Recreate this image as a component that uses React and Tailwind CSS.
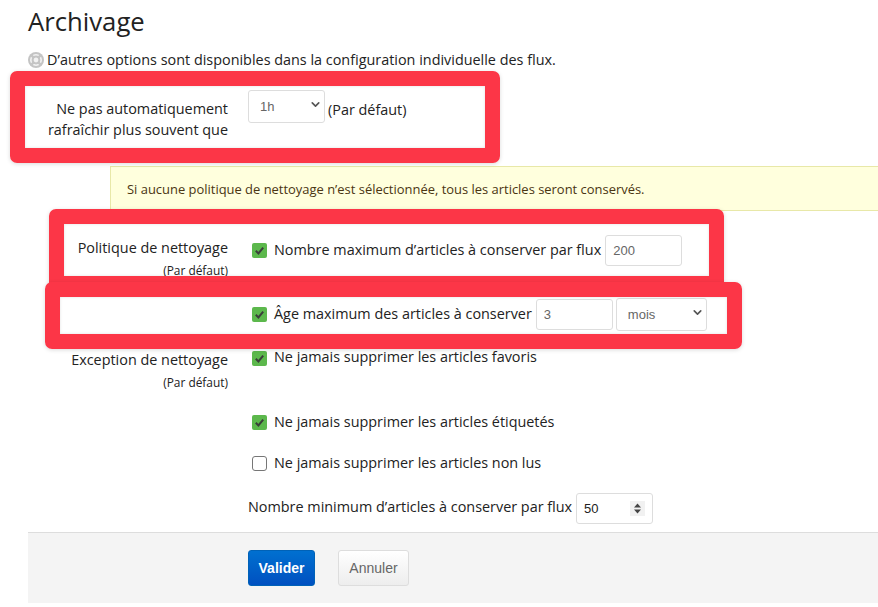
import React from 'react'
import { ChevronDown } from 'lucide-react'

const HelpIcon = () => (
  <svg width="16" height="16" viewBox="0 0 16 16" className="shrink-0">
    <circle cx="8" cy="8" r="8" fill="#c4c4c4" />
    <circle cx="8" cy="8" r="5.2" fill="none" stroke="#f2f2f2" strokeWidth="1.6" />
    <circle cx="8" cy="8" r="2.4" fill="#f2f2f2" />
    <path d="M3.4 3.4 L6.2 6.2 M12.6 3.4 L9.8 6.2 M3.4 12.6 L6.2 9.8 M12.6 12.6 L9.8 9.8" stroke="#c4c4c4" strokeWidth="2.4" />
  </svg>
)

const Check = ({ checked }) => (
  checked ? (
    <span className="flex h-[15px] w-[15px] shrink-0 items-center justify-center rounded-[2px] bg-[#5cb84c]">
      <svg width="11" height="11" viewBox="0 0 11 11">
        <path d="M1.8 5.8 L4.4 8.4 L9.2 2.6" fill="none" stroke="#3a3f3a" strokeWidth="2" />
      </svg>
    </span>
  ) : (
    <span className="h-[15px] w-[15px] shrink-0 rounded-[3px] border border-[#767676] bg-white" />
  )
)

const Select = ({ value, width, height }) => (
  <div className={`relative shrink-0 ${width} ${height}`}>
    <select
      defaultValue={value}
      className="h-full w-full appearance-none rounded-[3px] border border-[#ddd] bg-white pl-[11px] font-['Liberation_Sans',sans-serif] text-[13px] text-[#666]"
    >
      <option>{value}</option>
    </select>
    <ChevronDown size={13} strokeWidth={3} className="pointer-events-none absolute right-[3px] top-[8px] text-[#555]" />
  </div>
)

const NumberInput = ({ value, stepper }) => (
  <div className="relative h-[31px] w-[77px] shrink-0">
    <input
      defaultValue={value}
      className={`h-full w-full rounded-[3px] border border-[#ddd] bg-white pl-[7px] font-['Liberation_Sans',sans-serif] text-[13px] ${stepper ? 'text-[#222]' : 'text-[#666]'}`}
    />
    {stepper && (
      <span className="absolute right-[8px] top-[8px] flex h-[15px] w-[15px] items-center justify-center bg-[#f1f1f1]">
        <svg width="9" height="11" viewBox="0 0 9 11">
          <path d="M4.5 0.5 L8 4.5 L1 4.5 Z M4.5 10.5 L8 6.5 L1 6.5 Z" fill="#444" />
        </svg>
      </span>
    )}
  </div>
)

const Row = ({ label, hint, className, labelClass, children }) => (
  <div className={`grid grid-cols-[200px_1fr] gap-x-5 ${className}`}>
    <div className={`text-right ${labelClass}`}>
      {label}
      {hint && <div className="mt-[4px] text-[11.9px] leading-[16px]">{hint}</div>}
    </div>
    <div className="flex min-w-0 items-center">{children}</div>
  </div>
)

const CheckRow = ({ checked, raised, text }) => (
  <div className="flex items-center gap-[7px] pl-[4px]">
    <Check checked={checked} />
    <span className={`whitespace-nowrap ${raised ? '-mt-[2px]' : ''}`}>{text}</span>
  </div>
)

export default function App() {
  return (
    <div className="relative h-[607px] w-[878px] overflow-hidden bg-white pl-[28px] font-['Open_Sans',sans-serif] text-[14.4px] leading-[20px] text-[#222]">
      <h1 className="pt-[4px] text-[25.7px] leading-[36px] text-[#222]">Archivage</h1>

      <p className="mt-[10px] flex items-center gap-[3px]">
        <HelpIcon />
        <span>D’autres options sont disponibles dans la configuration individuelle des flux.</span>
      </p>

      <Row
        label={<>Ne pas automatiquement<br />rafraîchir plus souvent que</>}
        labelClass="pt-[8px] leading-[21px]"
        className="mt-[20px] h-[76px] items-start"
      >
        <div className="flex items-center gap-[3px]">
          <Select value="1h" width="w-[77px]" height="h-[33px]" />
          <span className="mt-[6px]">(Par défaut)</span>
        </div>
      </Row>

      <div className="ml-[82px] flex h-[45px] items-center border border-r-0 border-[#e8e8a8] bg-[#ffffdd] pl-[16px] text-[12.95px] text-[#4a3512]">
        Si aucune politique de nettoyage n’est sélectionnée, tous les articles seront conservés.
      </div>

      <Row label="Politique de nettoyage" hint="(Par défaut)" labelClass="pt-[3px]" className="mt-[24px] h-[64px] items-start">
        <div className="flex items-center">
          <CheckRow checked raised text="Nombre maximum d’articles à conserver par flux" />
          <div className="ml-[4px]"><NumberInput value="200" /></div>
        </div>
      </Row>

      <div className="-mt-[1px] pl-[220px]">
        <div className="flex items-center">
          <CheckRow checked raised text="Âge maximum des articles à conserver" />
          <div className="ml-[4px]"><NumberInput value="3" /></div>
          <div className="ml-[3px]"><Select value="mois" width="w-[91px]" height="h-[33px]" /></div>
        </div>
      </div>

      <Row label="Exception de nettoyage" hint="(Par défaut)" labelClass="pt-[1px]" className="mt-[18px] h-[46px] items-start">
        <CheckRow checked raised text="Ne jamais supprimer les articles favoris" />
      </Row>

      <div className="pl-[220px]">
        <div className="mt-[17px]"><CheckRow checked text="Ne jamais supprimer les articles étiquetés" /></div>
        <div className="mt-[21px]"><CheckRow text="Ne jamais supprimer les articles non lus" /></div>
        <div className="mt-[20px] flex items-start gap-[4px] whitespace-nowrap">
          <span className="pt-[4px]">Nombre minimum d’articles à conserver par flux</span>
          <NumberInput value="50" stepper />
        </div>
      </div>

      <div className="mt-[8px] flex h-[71px] items-start gap-[23px] border-t border-[#ddd] bg-[#f4f4f4] pl-[220px] pt-[17px] font-['Liberation_Sans',sans-serif] text-[14px]">
        <button className="h-[36px] w-[67px] rounded-[3px] border border-[#0062b7] bg-gradient-to-b from-[#0070d0] to-[#0050c0] font-bold text-white">Valider</button>
        <button className="h-[36px] w-[71px] rounded-[3px] border border-[#ddd] bg-gradient-to-b from-white to-[#ededed] text-[#666]">Annuler</button>
      </div>

      {/* red annotation frames drawn over the form */}
      <div className="absolute left-[10px] top-[71px] h-[92px] w-[490px] rounded-[7px] border-[15px] border-[#fc3647] shadow-[0_1px_4px_rgba(0,0,0,0.15),inset_0_0_3px_rgba(0,0,0,0.12)]" />
      <div className="absolute left-[49px] top-[209px] h-[82px] w-[675px] rounded-[7px] border-[15px] border-[#fc3647] shadow-[0_1px_4px_rgba(0,0,0,0.15),inset_0_0_3px_rgba(0,0,0,0.12)]" />
      <div className="absolute left-[45px] top-[282px] h-[67px] w-[697px] rounded-[7px] border-[15px] border-[#fc3647] shadow-[0_1px_4px_rgba(0,0,0,0.15),inset_0_0_3px_rgba(0,0,0,0.12)]" />
    </div>
  )
}
